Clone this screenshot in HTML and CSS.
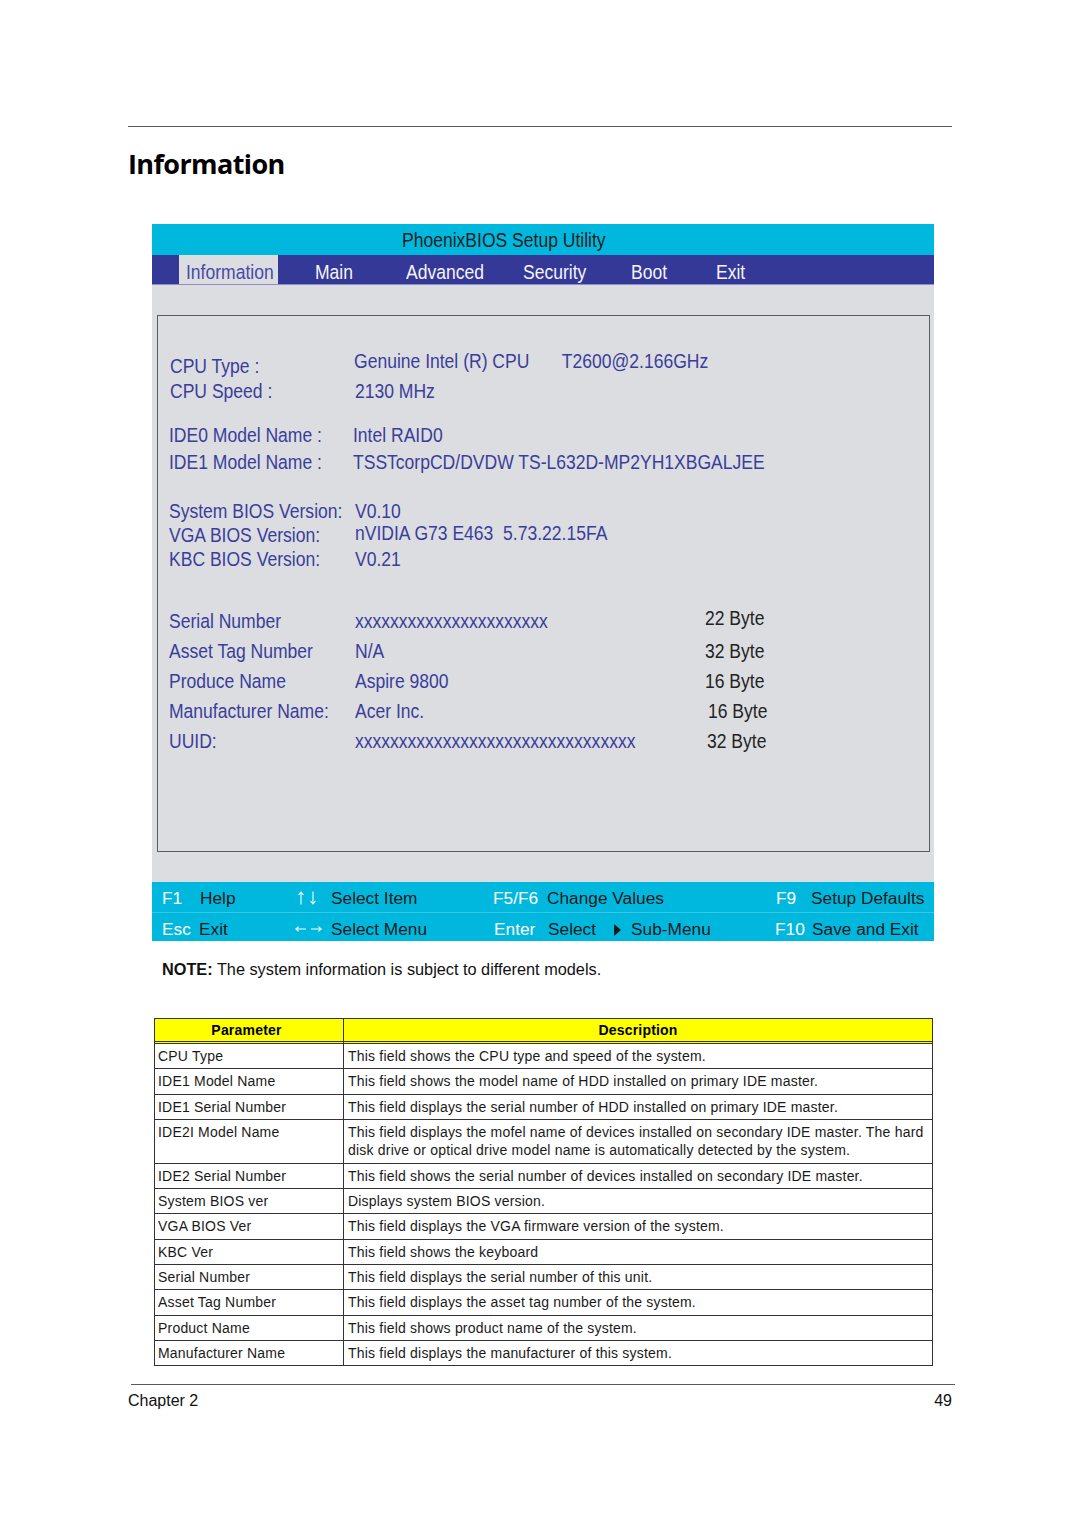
FILE: index.html
```html
<!DOCTYPE html>
<html lang="en">
<head>
<meta charset="utf-8">
<title>Information</title>
<link rel="stylesheet" href="styles.css">
</head>
<body>
<div class="page">
  <div class="rule"></div>
  <h1 class="title">Information</h1>

  <div class="bios">
    <div class="bios-title"><span class="c">PhoenixBIOS Setup Utility</span></div>
    <div class="bios-menu">
      <div class="m-lead"></div>
      <div class="m-item m-active"><span class="c">Information</span></div>
      <div class="m-item m-main"><span class="c">Main</span></div>
      <div class="m-item"><span class="c">Advanced</span></div>
      <div class="m-item"><span class="c">Security</span></div>
      <div class="m-item"><span class="c">Boot</span></div>
      <div class="m-item"><span class="c">Exit</span></div>
    </div>
    <div class="bios-panel">
      <div class="info-box">
        <div class="grp g1">
          <div class="row"><div class="lbl nudge-dn"><span class="c">CPU Type :</span></div><div class="val nudge-up"><span class="c">Genuine Intel (R) CPU<span class="gap">T2600@2.166GHz</span></span></div><div></div></div>
          <div class="row"><div class="lbl"><span class="c">CPU Speed :</span></div><div class="val sh1"><span class="c">2130 MHz</span></div><div></div></div>
        </div>
        <div class="grp g2">
          <div class="row"><div class="lbl"><span class="c">IDE0 Model Name :</span></div><div class="val"><span class="c">Intel RAID0</span></div><div></div></div>
          <div class="row"><div class="lbl"><span class="c">IDE1 Model Name :</span></div><div class="val"><span class="c">TSSTcorpCD/DVDW TS-L632D-MP2YH1XBGALJEE</span></div><div></div></div>
        </div>
        <div class="grp g3">
          <div class="row"><div class="lbl"><span class="c">System BIOS Version:</span></div><div class="val"><span class="c">V0.10</span></div><div></div></div>
          <div class="row"><div class="lbl"><span class="c">VGA BIOS Version:</span></div><div class="val nudge-up1"><span class="c">nVIDIA G73 E463&nbsp; 5.73.22.15FA</span></div><div></div></div>
          <div class="row"><div class="lbl"><span class="c">KBC BIOS Version:</span></div><div class="val"><span class="c">V0.21</span></div><div></div></div>
        </div>
        <div class="grp g4">
          <div class="row"><div class="lbl"><span class="c">Serial Number</span></div><div class="val"><span class="c">xxxxxxxxxxxxxxxxxxxxxx</span></div><div class="byte nudge-up"><span class="c">22 Byte</span></div></div>
          <div class="row"><div class="lbl"><span class="c">Asset Tag Number</span></div><div class="val"><span class="c">N/A</span></div><div class="byte"><span class="c">32 Byte</span></div></div>
          <div class="row"><div class="lbl"><span class="c">Produce Name</span></div><div class="val"><span class="c">Aspire 9800</span></div><div class="byte"><span class="c">16 Byte</span></div></div>
          <div class="row"><div class="lbl"><span class="c">Manufacturer Name:</span></div><div class="val"><span class="c">Acer Inc.</span></div><div class="byte sh3"><span class="c">16 Byte</span></div></div>
          <div class="row"><div class="lbl"><span class="c">UUID:</span></div><div class="val"><span class="c">xxxxxxxxxxxxxxxxxxxxxxxxxxxxxxxx</span></div><div class="byte sh2"><span class="c">32 Byte</span></div></div>
        </div>
      </div>
    </div>
    <div class="bios-keys">
      <div class="krow kr1">
        <div class="k">F1</div>
        <div class="d sh1">Help</div>
        <div class="arr sh2"><svg class="arr-v" width="20" height="14" viewBox="0 0 20 14"><path d="M3 13.5V1M0.6 3.8L3 1L5.4 3.8M15 0.5V13M12.6 10.2L15 13L17.4 10.2" fill="none" stroke="#fff" stroke-width="1.1"/></svg></div>
        <div class="d">Select Item</div>
        <div class="k">F5/F6</div>
        <div class="d">Change Values</div>
        <div class="k sh1">F9</div>
        <div class="d">Setup Defaults</div>
      </div>
      <div class="krow kr2">
        <div class="k">Esc</div>
        <div class="d">Exit</div>
        <div class="arr"><svg class="arr-h" width="28" height="10" viewBox="0 0 28 10"><path d="M11 5H0.8M3.6 2.6L0.8 5L3.6 7.4M16 5H26.2M23.4 2.6L26.2 5L23.4 7.4" fill="none" stroke="#fff" stroke-width="1.1"/></svg></div>
        <div class="d">Select Menu</div>
        <div class="k sh1">Enter</div>
        <div class="d sh1">Select<span class="tri"></span><span class="sub">Sub-Menu</span></div>
        <div class="k">F10</div>
        <div class="d sh1">Save and Exit</div>
      </div>
    </div>
  </div>

  <p class="note"><b>NOTE:</b> The system information is subject to different models.</p>

  <table class="params">
    <thead>
      <tr><th class="cp">Parameter</th><th class="cd">Description</th></tr>
    </thead>
    <tbody>
      <tr><td>CPU Type</td><td>This field shows the CPU type and speed of the system.</td></tr>
      <tr><td>IDE1 Model Name</td><td>This field shows the model name of HDD installed on primary IDE master.</td></tr>
      <tr><td>IDE1 Serial Number</td><td>This field displays the serial number of HDD installed on primary IDE master.</td></tr>
      <tr><td>IDE2I Model Name</td><td><span class="nw">This field displays the mofel name of devices installed on secondary IDE master. The hard</span><br><span class="nw">disk drive or optical drive model name is automatically detected by the system.</span></td></tr>
      <tr><td>IDE2 Serial Number</td><td>This field shows the serial number of devices installed on secondary IDE master.</td></tr>
      <tr><td>System BIOS ver</td><td>Displays system BIOS version.</td></tr>
      <tr><td>VGA BIOS Ver</td><td>This field displays the VGA firmware version of the system.</td></tr>
      <tr><td>KBC Ver</td><td>This field shows the keyboard</td></tr>
      <tr><td>Serial Number</td><td>This field displays the serial number of this unit.</td></tr>
      <tr><td>Asset Tag Number</td><td>This field displays the asset tag number of the system.</td></tr>
      <tr><td>Product Name</td><td>This field shows product name of the system.</td></tr>
      <tr><td>Manufacturer Name</td><td>This field displays the manufacturer of this system.</td></tr>
    </tbody>
  </table>

  <div class="foot-rule"></div>
  <div class="foot"><span>Chapter 2</span><span>49</span></div>
</div>
</body>
</html>
```

FILE: styles.css
```css
* { box-sizing: border-box; }

body {
  margin: 0;
  background: #ffffff;
  font-family: "Liberation Sans", Arial, Helvetica, sans-serif;
  color: #1a1a1a;
}

.page {
  width: 824px;
  margin-left: 128px;
  padding-top: 126px;
}

.rule {
  height: 1px;
  background: #5a5a5a;
}

.title {
  margin: 19px 0 0 0;
  font-family: "Open Sans", "Liberation Sans", sans-serif;
  font-weight: 700;
  font-size: 27px;
  line-height: 36px;
  letter-spacing: -0.6px;
  color: #000;
}

/* ---------- BIOS screen ---------- */
.bios {
  margin: 42px 0 0 24px;
  width: 782px;
}

.c {
  display: inline-block;
  white-space: nowrap;
  transform: scaleX(0.855);
  transform-origin: 0 50%;
}

.bios-title {
  height: 31px;
  background: #00b8de;
  padding-left: 250px;
  font-size: 20.5px;
  line-height: 31px;
  color: #1e1e1e;
}

.bios-menu {
  display: grid;
  grid-template-columns: 27px 99px 128px 117px 108px 85px 1fr;
  height: 30px;
  background: #343896;
  border-bottom: 1px solid #8d8fc8;
  font-size: 20.5px;
  color: #f4f4f8;
}

.m-item {
  padding-top: 5px;
  line-height: 24px;
  white-space: nowrap;
}

.m-active {
  background: #dcdde0;
  color: #4848aa;
  padding-left: 7px;
}

.m-main { padding-left: 37px; }

.bios-panel {
  background: #dcdde0;
  padding: 30px 4px 30px 5px;
}

.info-box {
  height: 537px;
  border: 1px solid #5c5c5e;
  padding: 34px 0 0 11px;
  font-size: 20.5px;
  color: #3a3d9c;
}

.row {
  display: grid;
  grid-template-columns: 186px 350px 1fr;
}

.g1 .row, .g2 .row { height: 27px; line-height: 27px; }
.g2 { margin-top: 17px; }
.g3 { margin-top: 24px; }
.g3 .row { height: 24px; line-height: 24px; }
.g4 { margin-top: 35px; }
.g4 .row { height: 30px; line-height: 30px; }

.g1 .lbl { padding-left: 1px; }
.g1 .val { margin-left: -1px; }
.g2 .val { margin-left: -2px; }
.nudge-dn { margin-top: 2px; }
.nudge-up { margin-top: -3px; }
.nudge-up1 { margin-top: -2px; }
.sh1 { padding-left: 1px; }
.sh2 { padding-left: 2px; }
.sh3 { padding-left: 3px; }

.gap { margin-left: 38px; }

.byte { color: #232323; }

/* ---------- key legend ---------- */
.bios-keys {
  background: #00b8de;
  height: 59px;
  font-size: 17.3px;
  color: #1a1a1a;
}

.krow {
  display: grid;
  grid-template-columns: 37px 97px 35px 162px 54px 228px 36px 1fr;
  padding-left: 10px;
  white-space: nowrap;
}

.kr1 {
  height: 30px;
  padding-top: 3px;
  line-height: 27px;
}

.kr2 {
  height: 29px;
  padding-top: 4px;
  line-height: 24px;
  border-top: 1px solid rgba(255, 255, 255, 0.22);
}

.k { color: #ffffff; }

.arr svg { display: inline-block; vertical-align: middle; }
.arr-v { margin-top: -3px; }
.arr-h { margin-top: -2px; margin-left: -1px; }

.tri {
  display: inline-block;
  width: 0;
  height: 0;
  margin: 0 10px 0 18px;
  border-left: 7px solid #1a1a1a;
  border-top: 6px solid transparent;
  border-bottom: 6px solid transparent;
  vertical-align: -1px;
}

/* ---------- note ---------- */
.note {
  margin: 18px 0 0 34px;
  font-size: 16.3px;
  line-height: 20px;
  color: #111;
}

/* ---------- table ---------- */
.params {
  margin: 39px 0 0 26px;
  width: 779px;
  table-layout: fixed;
  border-collapse: separate;
  border-spacing: 0;
  border-top: 1px solid #333;
  border-left: 1px solid #333;
  font-size: 14px;
  letter-spacing: 0.2px;
  color: #1a1a1a;
}

.params th,
.params td {
  border-right: 1px solid #333;
  border-bottom: 1px solid #333;
  text-align: left;
  vertical-align: top;
  padding: 3px 4px;
  line-height: 18.33px;
  font-weight: normal;
}

.params td:first-child { padding-left: 3px; }

.params th {
  background: #ffff00;
  font-weight: 700;
  text-align: center;
  padding: 0;
  line-height: 22px;
  border-bottom: 3px double #333;
  color: #000;
}

.params .cp { width: 189px; padding-right: 5px; }

.nw { white-space: nowrap; }

/* ---------- page footer ---------- */
.foot-rule {
  margin: 17.7px -3px 0 3px;
  height: 1px;
  background: #5a5a5a;
}

.foot {
  display: flex;
  justify-content: space-between;
  margin-top: 6px;
  font-size: 16px;
  line-height: 20px;
  color: #111;
}
```
